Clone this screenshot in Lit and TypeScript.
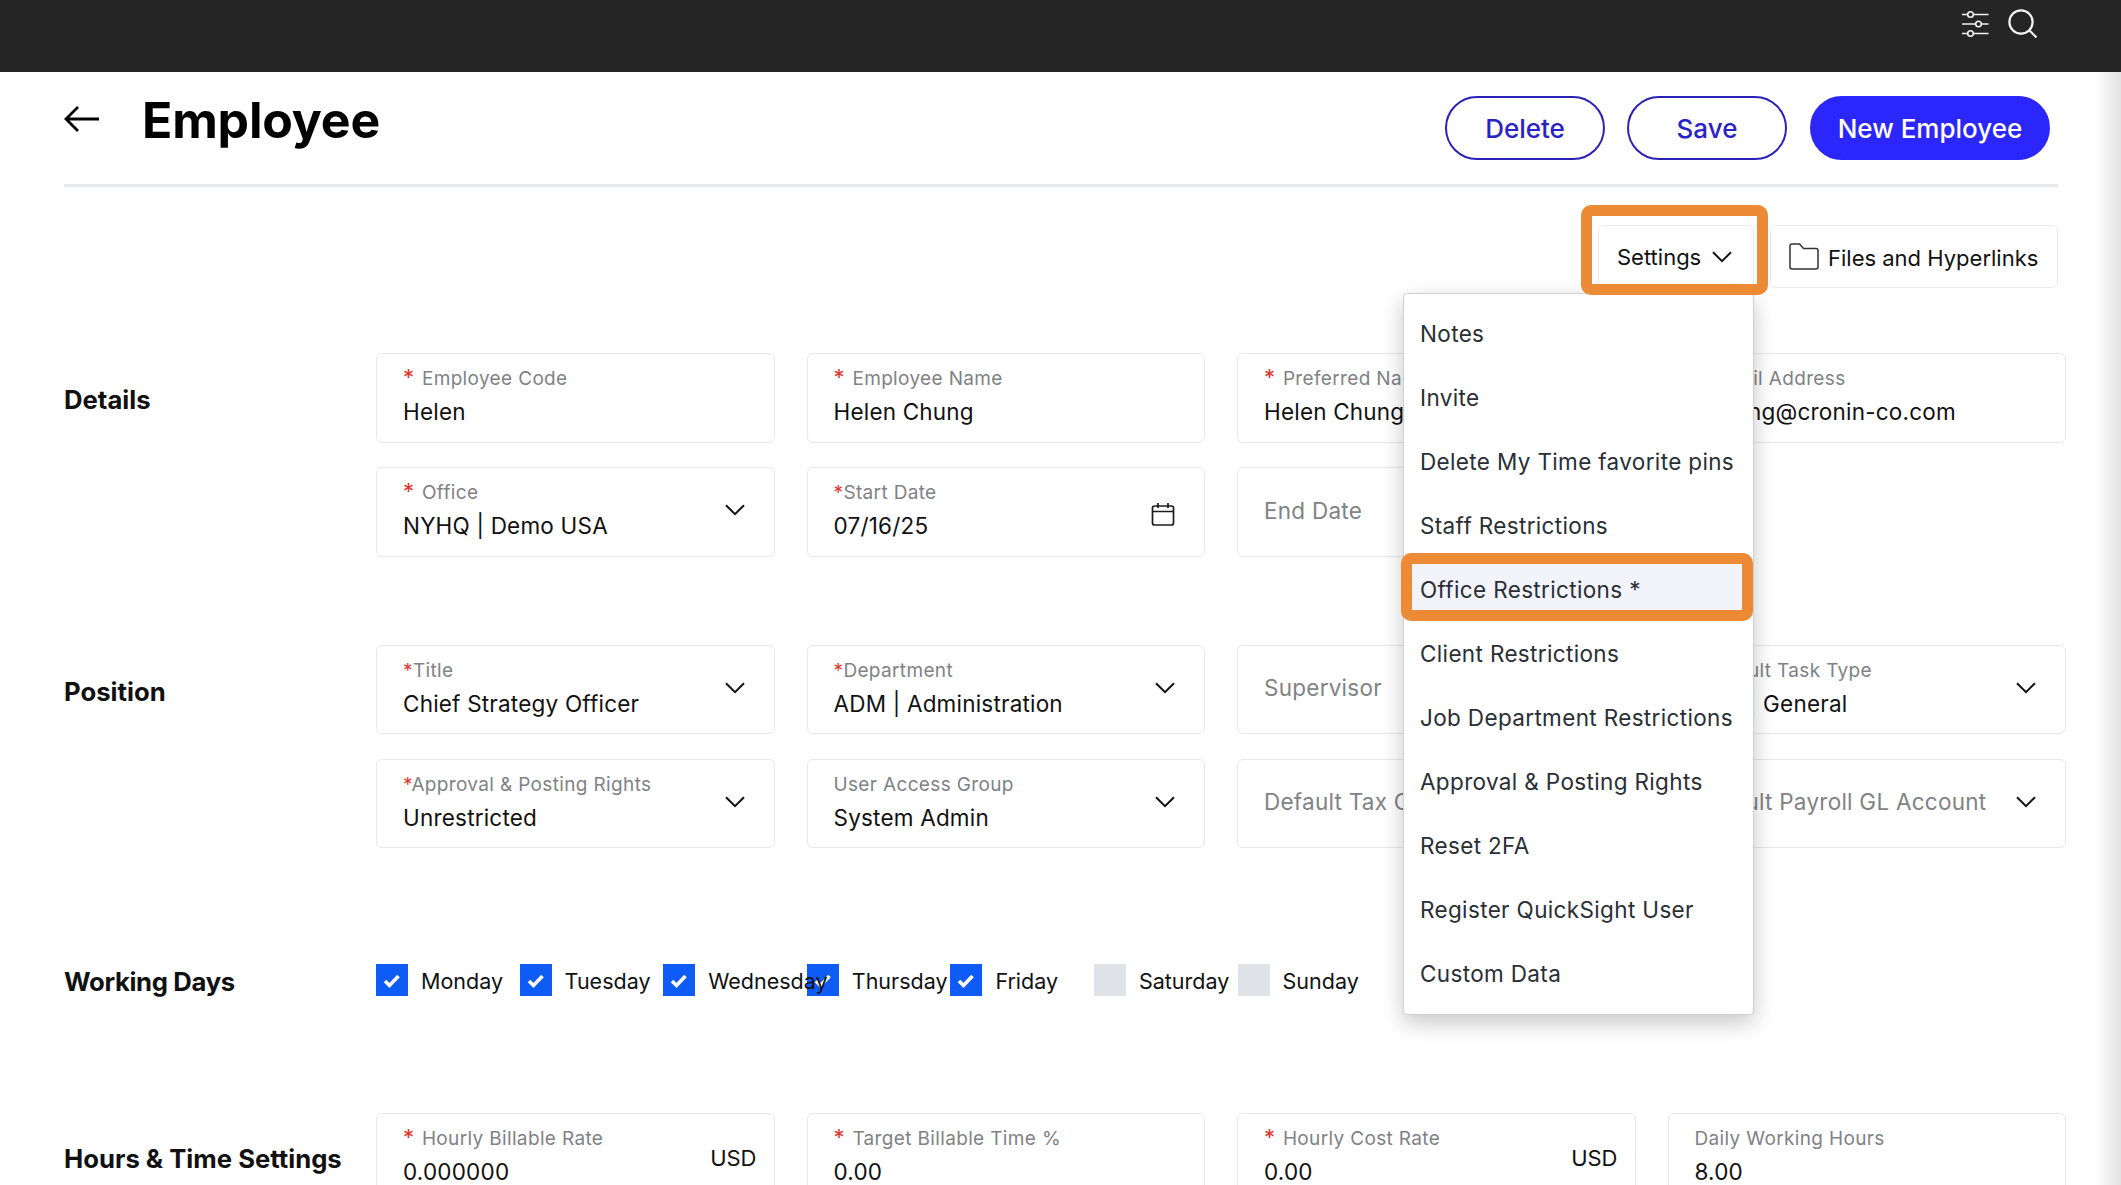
import { LitElement, html, css, nothing } from 'lit';
import { customElement } from 'lit/decorators.js';

type Tail = 'chevron' | 'calendar' | 'usd';

interface Field {
  label?: string;
  required?: 'spaced' | 'tight';
  value?: string;
  placeholder?: string;
  tail?: Tail;
}

const chevron = html`<svg class="chevron" width="20" height="12" viewBox="0 0 20 12" fill="none" stroke="currentColor" stroke-width="2"><path d="M1 1.2 10 10.2l9-9" /></svg>`;

const calendar = html`<svg width="24" height="24" viewBox="0 0 24 24" fill="none" stroke="#1c1c1c" stroke-width="1.7"><rect x="1.5" y="4" width="21" height="19" rx="2" /><path d="M1.5 9.5h21M7 1v5M17 1v5" /></svg>`;

const details: Field[] = [
  { label: 'Employee Code', required: 'spaced', value: 'Helen' },
  { label: 'Employee Name', required: 'spaced', value: 'Helen Chung' },
  { label: 'Preferred Name', required: 'spaced', value: 'Helen Chung' },
  { label: 'Email Address', required: 'spaced', value: 'hchung@cronin-co.com' },
  { label: 'Office', required: 'spaced', value: 'NYHQ | Demo USA', tail: 'chevron' },
  { label: 'Start Date', required: 'tight', value: '07/16/25', tail: 'calendar' },
  { placeholder: 'End Date' },
];

const position: Field[] = [
  { label: 'Title', required: 'tight', value: 'Chief Strategy Officer', tail: 'chevron' },
  { label: 'Department', required: 'tight', value: 'ADM | Administration', tail: 'chevron' },
  { placeholder: 'Supervisor' },
  { label: 'Default Task Type', required: 'tight', value: 'GEN | General', tail: 'chevron' },
  { label: 'Approval & Posting Rights', required: 'tight', value: 'Unrestricted', tail: 'chevron' },
  { label: 'User Access Group', value: 'System Admin', tail: 'chevron' },
  { placeholder: 'Default Tax Code' },
  { placeholder: 'Default Payroll GL Account', tail: 'chevron' },
];

const hours: Field[] = [
  { label: 'Hourly Billable Rate', required: 'spaced', value: '0.000000', tail: 'usd' },
  { label: 'Target Billable Time %', required: 'spaced', value: '0.00' },
  { label: 'Hourly Cost Rate', required: 'spaced', value: '0.00', tail: 'usd' },
  { label: 'Daily Working Hours', value: '8.00' },
];

const days = [
  { name: 'Monday', on: true },
  { name: 'Tuesday', on: true },
  { name: 'Wednesday', on: true },
  { name: 'Thursday', on: true },
  { name: 'Friday', on: true },
  { name: 'Saturday', on: false },
  { name: 'Sunday', on: false },
];

const menuItems = [
  'Notes',
  'Invite',
  'Delete My Time favorite pins',
  'Staff Restrictions',
  'Office Restrictions *',
  'Client Restrictions',
  'Job Department Restrictions',
  'Approval & Posting Rights',
  'Reset 2FA',
  'Register QuickSight User',
  'Custom Data',
];

@customElement('app-root')
export class AppRoot extends LitElement {
  static styles = css`
    :host {
      display: block;
      position: relative;
      height: 1185px;
      overflow: hidden;
      background: #fff;
      font-family: Inter, 'Liberation Sans', sans-serif;
      color: #111;
    }

    .edge {
      position: absolute;
      top: 72px;
      right: 0;
      bottom: 0;
      width: 26px;
      background: linear-gradient(to right, rgba(225, 225, 225, 0), #e2e2e2);
    }

    .topbar {
      position: relative;
      height: 72px;
      background: #252525;
      display: flex;
      justify-content: flex-end;
      gap: 19px;
      padding: 9px 83px 0 0;
      box-sizing: border-box;
    }

    .topbar svg {
      display: block;
    }

    .page {
      position: relative;
      padding: 0 55px 0 64px;
    }

    .head {
      display: flex;
      align-items: flex-start;
      height: 112px;
      margin-right: 8px;
      border-bottom: 3px solid #e6e8e9;
      box-sizing: content-box;
    }

    .back {
      margin-top: 33px;
      width: 78px;
      flex: none;
    }

    h1 {
      margin: 17px 0 0;
      flex: 1;
      font-size: 50px;
      line-height: 62px;
      font-weight: 700;
      letter-spacing: -0.2px;
      color: #000;
    }

    .actions {
      display: flex;
      gap: 22px;
      margin: 24px 8px 0 0;
    }

    .pill {
      height: 64px;
      width: 160px;
      box-sizing: border-box;
      border-radius: 32px;
      border: 2px solid #2a22b8;
      color: #2a22c8;
      font-size: 26px;
      font-weight: 500;
      display: flex;
      align-items: center;
      justify-content: center;
    }

    .pill.primary {
      width: 240px;
      margin-left: 1px;
      background: #2b26fb;
      border-color: #2b26fb;
      color: #fff;
    }

    .toolbar {
      display: flex;
      justify-content: flex-end;
      margin: 38px 8px 0 0;
      gap: 16px;
      height: 63px;
    }

    .tool {
      box-sizing: border-box;
      border: 1px solid #e8eaeb;
      border-radius: 6px;
      display: flex;
      align-items: center;
      font-size: 22px;
      white-space: nowrap;
    }

    .settings {
      position: relative;
      width: 156px;
      padding-left: 18px;
      gap: 11px;
    }

    .files {
      width: 288px;
      padding-left: 18px;
      gap: 9px;
    }

    .files span {
      padding-top: 2px;
    }

    .frame {
      position: absolute;
      box-sizing: border-box;
      border: 11px solid #ed8a36;
      border-radius: 10px;
      pointer-events: none;
      z-index: 3;
    }

    .settings .frame {
      top: -21px;
      bottom: -8px;
      left: -18px;
      right: -15px;
    }

    .menu {
      position: absolute;
      top: calc(100% + 6px);
      right: -1px;
      width: 351px;
      box-sizing: border-box;
      padding: 7px 0 9px;
      background: #fff;
      border: 1px solid #cfcfcf;
      border-radius: 4px;
      box-shadow: 0 8px 22px rgba(0, 0, 0, 0.22);
      z-index: 2;
    }

    .item {
      position: relative;
      height: 64px;
      padding-left: 16px;
      display: flex;
      align-items: center;
      font-size: 22.5px;
      letter-spacing: 0.35px;
      color: #2a2e35;
    }

    .item.active {
      background: linear-gradient(#f2f3fb, #f2f3fb) no-repeat 0 6px / 100% 52px;
    }

    .item .frame {
      top: -4px;
      bottom: 0;
      left: -3px;
      right: 0;
    }

    .section {
      display: grid;
      grid-template-columns: 312px 1fr;
    }

    .section.details {
      margin-top: 65px;
    }

    .section.position {
      margin-top: 88px;
    }

    .section.working {
      margin-top: 116px;
    }

    .section.hours {
      margin-top: 117px;
    }

    .title {
      height: 90px;
      box-sizing: border-box;
      display: flex;
      align-items: center;
      font-size: 25.7px;
      font-weight: 700;
      color: #111;
      white-space: nowrap;
    }

    .details .title,
    .position .title {
      padding-top: 3px;
    }

    .working .title {
      height: 32px;
      padding-top: 2px;
      letter-spacing: -0.35px;
    }

    .grid {
      display: grid;
      grid-template-columns: repeat(4, 1fr);
      gap: 24px 32px;
    }

    .position .grid {
      row-gap: 25px;
    }

    .position .grid .field {
      height: 89px;
    }

    .field {
      height: 90px;
      box-sizing: border-box;
      border: 1px solid #e6e8ea;
      border-radius: 6px;
      padding: 0 17px 0 26px;
      display: flex;
      align-items: center;
      background: #fff;
      min-width: 0;
    }

    .text {
      flex: 1;
      min-width: 0;
      white-space: nowrap;
      padding-bottom: 3px;
    }

    .placeholder-wrap {
      padding-bottom: 0;
    }

    .label {
      font-size: 19px;
      line-height: 22px;
      letter-spacing: 0.35px;
      color: #808285;
    }

    .star {
      color: #e5322d;
    }

    .star.spaced {
      font-size: 22px;
      line-height: 0;
      margin-right: 7.5px;
    }

    .value {
      margin-top: 8px;
      font-size: 22.5px;
      line-height: 27px;
      letter-spacing: 0.2px;
      color: #111;
    }

    .placeholder {
      font-size: 22.5px;
      line-height: 27px;
      letter-spacing: 0.25px;
      color: #808285;
      padding-bottom: 4px;
    }

    .tail {
      flex: none;
      display: flex;
    }

    .tail.chevron {
      margin: 0 12px 4px 0;
    }

    .tail.calendar {
      margin: 3px 12px 0 0;
    }

    .tail.usd {
      font-size: 22px;
    }

    .days {
      display: grid;
      grid-template-columns: repeat(7, 143.6px);
    }

    .day {
      display: flex;
      align-items: center;
      gap: 13px;
      height: 32px;
      font-size: 21.5px;
      white-space: nowrap;
    }

    .box {
      width: 32px;
      height: 32px;
      flex: none;
      background: #dfe3e8;
    }

    .box.on {
      background: #0f5bf5;
    }

    .day span {
      position: relative;
      z-index: 1;
      padding-top: 2px;
    }

    .chevron {
      display: block;
    }
  `;

  private renderField(f: Field) {
    return html`
      <div class="field">
        <div class="text ${f.placeholder ? 'placeholder-wrap' : ''}">
          ${f.placeholder
            ? html`<div class="placeholder">${f.placeholder}</div>`
            : html`
                <div class="label">${f.required
                  ? html`<span class="star ${f.required}">*</span>`
                  : nothing}${f.label}</div>
                <div class="value">${f.value}</div>
              `}
        </div>
        ${f.tail === 'chevron' ? html`<div class="tail chevron">${chevron}</div>` : nothing}
        ${f.tail === 'calendar' ? html`<div class="tail calendar">${calendar}</div>` : nothing}
        ${f.tail === 'usd' ? html`<div class="tail usd">USD</div>` : nothing}
      </div>
    `;
  }

  render() {
    return html`
      <div class="edge"></div>
      <div class="topbar">
        <svg width="27" height="32" viewBox="0 0 27 32" fill="none" stroke="#f2f2f2" stroke-width="1.6">
          <path d="M0 5.5h5.5M11.5 5.5H26.5M0 15h13.5M19.5 15h7M0 24.5h5.5M11.5 24.5H26.5" />
          <circle cx="8.5" cy="5.5" r="2.8" />
          <circle cx="16.5" cy="15" r="2.8" />
          <circle cx="8.5" cy="24.5" r="2.8" />
        </svg>
        <svg width="30" height="30" viewBox="0 0 30 30" fill="none" stroke="#f4f4f4" stroke-width="2.2">
          <circle cx="13" cy="13" r="11.6" />
          <path d="M21.5 21.5 28.5 28.5" />
        </svg>
      </div>
      <div class="page">
        <div class="head">
          <div class="back">
            <svg width="36" height="28" viewBox="0 0 36 28" fill="none" stroke="#000" stroke-width="2.8">
              <path d="M35 14H2M14 2 2 14l12 12" />
            </svg>
          </div>
          <h1>Employee</h1>
          <div class="actions">
            <div class="pill">Delete</div>
            <div class="pill">Save</div>
            <div class="pill primary">New Employee</div>
          </div>
        </div>

        <div class="toolbar">
          <div class="tool settings">
            Settings ${chevron}
            <div class="frame"></div>
            <div class="menu">
              ${menuItems.map((item, i) => html`
                <div class="item ${i === 4 ? 'active' : ''}">
                  ${item}
                  ${i === 4 ? html`<div class="frame"></div>` : nothing}
                </div>
              `)}
            </div>
          </div>
          <div class="tool files">
            <svg width="30" height="27" viewBox="0 0 30 27" fill="none" stroke="#333" stroke-width="1.5">
              <path d="M1 3a2 2 0 0 1 2-2h7.5l4 4.5H27a2 2 0 0 1 2 2V24a2 2 0 0 1-2 2H3a2 2 0 0 1-2-2Z" />
            </svg>
            <span>Files and Hyperlinks</span>
          </div>
        </div>

        <div class="section details">
          <div class="title">Details</div>
          <div class="grid">${details.map((f) => this.renderField(f))}</div>
        </div>

        <div class="section position">
          <div class="title">Position</div>
          <div class="grid">${position.map((f) => this.renderField(f))}</div>
        </div>

        <div class="section working">
          <div class="title">Working Days</div>
          <div class="days">
            ${days.map((d) => html`
              <div class="day">
                <div class="box ${d.on ? 'on' : ''}">
                  ${d.on
                    ? html`<svg width="32" height="32" viewBox="0 0 32 32" fill="none" stroke="#fff" stroke-width="3.6"><path d="M9 17l4.5 4.5L22.5 12" /></svg>`
                    : nothing}
                </div>
                <span>${d.name}</span>
              </div>
            `)}
          </div>
        </div>

        <div class="section hours">
          <div class="title">Hours &amp; Time Settings</div>
          <div class="grid">${hours.map((f) => this.renderField(f))}</div>
        </div>
      </div>
    `;
  }
}
